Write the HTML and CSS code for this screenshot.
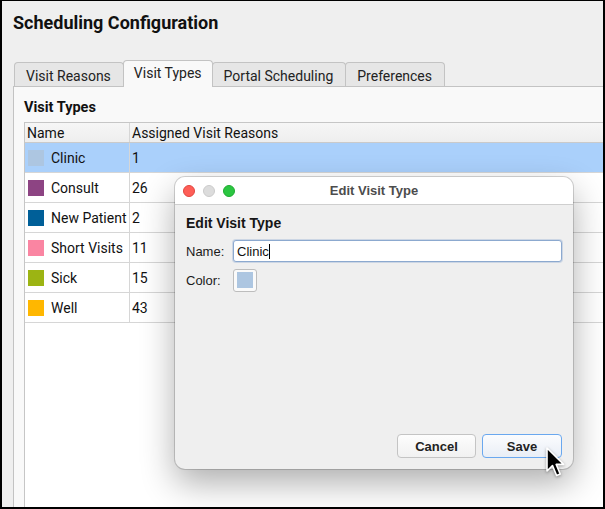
FILE: index.html
```html
<!DOCTYPE html>
<html lang="en">
<head>
  <meta charset="UTF-8">
  <title>Scheduling Configuration</title>
  <link rel="stylesheet" href="styles.css">
</head>
<body>
  <div class="frame">
    <h1 class="page-title">Scheduling Configuration</h1>

    <!-- tab strip -->
    <div class="tabs">
      <div class="tab">Visit Reasons</div>
      <div class="tab active">Visit Types</div>
      <div class="tab">Portal Scheduling</div>
      <div class="tab">Preferences</div>
    </div>

    <div class="panel">
      <h2 class="panel-title">Visit Types</h2>

      <div class="grid">
        <div class="row head">
          <div class="cell name">Name</div>
          <div class="cell count">Assigned Visit Reasons</div>
        </div>
        <div class="row selected">
          <div class="cell name"><span class="swatch" style="background:#adc6e1"></span>Clinic</div>
          <div class="cell count">1</div>
        </div>
        <div class="row">
          <div class="cell name"><span class="swatch" style="background:#8d4483"></span>Consult</div>
          <div class="cell count">26</div>
        </div>
        <div class="row">
          <div class="cell name"><span class="swatch" style="background:#005f98"></span>New Patient</div>
          <div class="cell count">2</div>
        </div>
        <div class="row">
          <div class="cell name"><span class="swatch" style="background:#fa85a2"></span>Short Visits</div>
          <div class="cell count">11</div>
        </div>
        <div class="row">
          <div class="cell name"><span class="swatch" style="background:#9cb413"></span>Sick</div>
          <div class="cell count">15</div>
        </div>
        <div class="row">
          <div class="cell name"><span class="swatch" style="background:#ffb700"></span>Well</div>
          <div class="cell count">43</div>
        </div>
      </div>
    </div>

    <!-- modal sheet -->
    <div class="dialog">
      <div class="dialog-bar">
        <div class="lights">
          <span class="light red"></span>
          <span class="light grey"></span>
          <span class="light green"></span>
        </div>
        <div class="dialog-caption">Edit Visit Type</div>
      </div>
      <div class="dialog-body">
        <h3 class="dialog-heading">Edit Visit Type</h3>
        <div class="form">
          <label class="form-label" for="typeName">Name:</label>
          <div class="text-field" id="typeName">Clinic<span class="caret"></span></div>
          <span class="form-label">Color:</span>
          <div class="color-button"><span class="color-chip"></span></div>
        </div>
        <div class="actions">
          <button class="btn">Cancel</button>
          <button class="btn default">Save</button>
        </div>
      </div>
    </div>

    <svg class="pointer" width="24" height="34" viewBox="0 0 24 34">
      <path d="M2 1 L2 24 L7.5 18.6 L11.6 28.5 L15.2 27 L11.2 17.4 L18.6 17.4 Z"
            fill="#000" stroke="#fff" stroke-width="1.6" stroke-linejoin="round"/>
    </svg>
  </div>
</body>
</html>
```

FILE: styles.css
```css
* {
  box-sizing: border-box;
}
body {
  margin: 0;
  font-family: Roboto, "Liberation Sans", sans-serif;
  font-size: 14px;
  color: #1d1d1d;
}
.frame {
  position: relative;
  width: 605px;
  height: 509px;
  border: 2px solid #000;
  border-top-width: 1px;
  background: #efefef;
  overflow: hidden;
  display: flex;
  flex-direction: column;
}
.page-title {
  margin: 0;
  padding: 11px 11px 0;
  font-size: 18px;
  line-height: 22px;
  font-weight: 700;
  color: #111;
}

/* tabs */
.tabs {
  display: flex;
  align-items: flex-end;
  margin-top: 26px;
  padding-left: 12px;
  position: relative;
  z-index: 1;
}
.tab {
  height: 24px;
  padding: 3px 12px 0 11px;
  line-height: 21px;
  background: #e6e6e6;
  border: 1px solid #c3c3c3;
  border-bottom: none;
  border-radius: 4px 4px 0 0;
  margin-right: -1px;
  color: #222;
}
.tab.active {
  height: 27px;
  margin-bottom: -1px;
  padding: 2px 10px 0;
  background: #f9f9f9;
}

.panel {
  flex: 1;
  display: flex;
  flex-direction: column;
  margin: 0 -20px -20px 11px;
  padding: 13px 0 0 10px;
  background: #f9f9f9;
  border-top: 1px solid #c3c3c3;
  border-left: 1px solid #c3c3c3;
}
.panel-title {
  margin: 0 0 6px 0;
  font-size: 14.5px;
  line-height: 16px;
  font-weight: 700;
  color: #111;
}

/* visit type list */
.grid {
  flex: 1;
  background: #fff;
  border: 1px solid #c6c6c6;
}
.row {
  display: flex;
  height: 30px;
  border-bottom: 1px solid #d6d6d6;
}
.row.head {
  height: 20px;
  background: linear-gradient(#f6f6f6, #eeeeee);
  border-bottom-color: #cacaca;
}
.row.selected {
  background: #aad0fb;
}
.cell {
  display: flex;
  align-items: center;
  white-space: nowrap;
  color: #111;
}
.cell.name {
  width: 105px;
  padding-left: 2px;
  border-right: 1px solid #d6d6d6;
}
.cell.count {
  padding-left: 2px;
}
.swatch {
  display: inline-block;
  flex: none;
  width: 16px;
  height: 16px;
  margin: 0 7px 0 1px;
}

/* dialog */
.dialog {
  position: absolute;
  left: 173px;
  top: 176px;
  width: 398px;
  height: 292px;
  display: flex;
  flex-direction: column;
  background: #efefef;
  border-radius: 10px;
  box-shadow: 0 0 0 1px rgba(0, 0, 0, 0.16), 0 14px 34px rgba(0, 0, 0, 0.32);
  overflow: hidden;
  font-family: "Liberation Sans", Arial, sans-serif;
}
.dialog-bar {
  position: relative;
  height: 28px;
  background: #fff;
  border-bottom: 1px solid #cfcfcf;
  display: flex;
  align-items: center;
  justify-content: center;
}
.lights {
  position: absolute;
  left: 8px;
  top: 8px;
  display: flex;
  gap: 8px;
}
.light {
  width: 12px;
  height: 12px;
  border-radius: 50%;
}
.light.red {
  background: #fe5e57;
  border: 1px solid #e1463f;
}
.light.grey {
  background: #dcdcdc;
  border: 1px solid #cbcbcb;
}
.light.green {
  background: #2bc641;
  border: 1px solid #1fab31;
}
.dialog-caption {
  font-size: 13px;
  font-weight: 700;
  color: #4c4c4c;
}
.dialog-body {
  flex: 1;
  display: flex;
  flex-direction: column;
  padding: 10px 11px 11px;
}
.dialog-heading {
  margin: 0 0 8px;
  font-size: 14px;
  line-height: 17px;
  font-weight: 700;
  color: #161616;
}
.form {
  display: grid;
  grid-template-columns: 40px 1fr;
  column-gap: 7px;
  row-gap: 7px;
  align-items: center;
}
.form-label {
  font-size: 13px;
  color: #1a1a1a;
}
.text-field {
  height: 22px;
  padding: 0 3px;
  display: flex;
  align-items: center;
  background: #fff;
  border: 1px solid #8ca9cf;
  border-radius: 3px;
  box-shadow: 0 0 0 1px rgba(140, 170, 210, 0.35);
  font-size: 13px;
  color: #111;
}
.caret {
  width: 1px;
  height: 15px;
  background: #000;
}
.color-button {
  width: 24px;
  height: 23px;
  padding: 2px 3px;
  background: #fafafa;
  border: 1px solid #bdbdbd;
  border-radius: 3px;
}
.color-chip {
  display: block;
  width: 16px;
  height: 16px;
  background: #adc6e1;
}
.actions {
  margin-top: auto;
  display: flex;
  justify-content: flex-end;
  gap: 6px;
}
.btn {
  width: 79px;
  height: 24px;
  font-family: "Liberation Sans", Arial, sans-serif;
  font-size: 13px;
  font-weight: 700;
  color: #222;
  background: linear-gradient(#fdfdfd, #f1f1f1);
  border: 1px solid #c4c4c4;
  border-radius: 4px;
}
.btn.default {
  width: 80px;
  border-color: #6aa8ef;
  background: linear-gradient(#fbfcfe, #e9eef6);
}

.pointer {
  position: absolute;
  left: 543px;
  top: 446px;
  filter: drop-shadow(0 1px 1.5px rgba(0, 0, 0, 0.35));
}
```
